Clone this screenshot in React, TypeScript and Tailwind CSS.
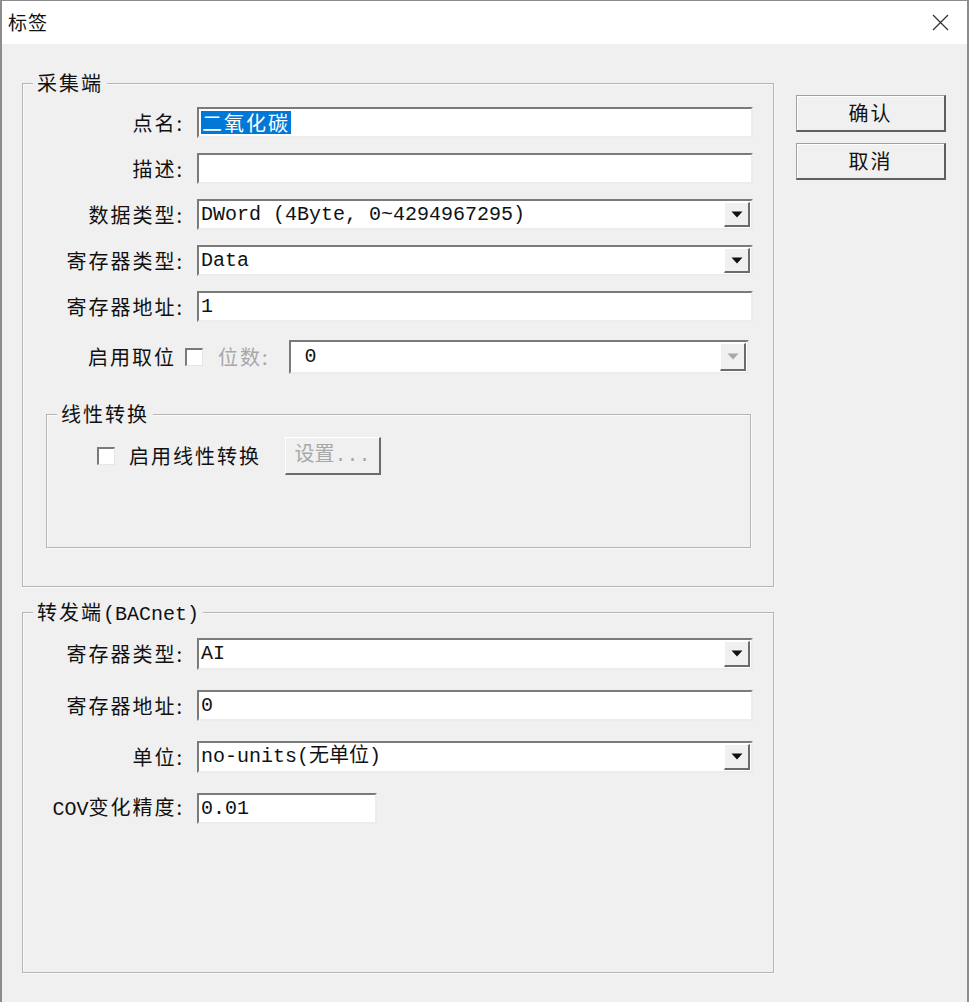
import React from 'react';

const cjk = { fontFamily: '"Noto Sans CJK SC", "Noto Sans", sans-serif' };
const mono = { fontFamily: '"Liberation Mono", "Noto Sans CJK SC", monospace' };

// Classic Win32 sunken edit box border
const sunken =
  'border-t-2 border-l-2 border-b-2 border-r-2 border-t-[#7a7a7a] border-l-[#7a7a7a] border-b-[#ececec] border-r-[#ececec] bg-white';

function DropArrow({ disabled }: { disabled?: boolean }) {
  return (
    <div className="w-[26px] h-full flex items-center justify-center bg-[#f0f0f0] border-t border-l border-b-2 border-r-2 border-t-white border-l-white border-b-[#6b6b6b] border-r-[#6b6b6b]">
      <svg width="12" height="7" viewBox="0 0 12 7">
        <path d="M0.5 0.5 H11.5 L6 6.5 Z" fill={disabled ? '#a8a8a8' : '#111'} />
      </svg>
    </div>
  );
}

function Edit({ value, selected, className = '' }: { value?: string; selected?: boolean; className?: string }) {
  return (
    <div className={`h-[31px] flex items-center pl-[2px] text-[20px] text-[#111] ${sunken} ${className}`} style={mono}>
      {selected ? (
        <span className="bg-[#0078d7] text-white leading-[23px] pl-[1px] pr-[1px] tracking-[2px]" style={cjk}>
          {value}
        </span>
      ) : (
        <span className="leading-none">{value}</span>
      )}
    </div>
  );
}

function Combo({ value, disabled, className = '' }: { value: string; disabled?: boolean; className?: string }) {
  return (
    <div className={`flex items-stretch text-[20px] text-[#111] ${sunken} ${className}`} style={mono}>
      <div className="flex-1 flex items-center pl-[2px] leading-none whitespace-pre">{value}</div>
      <div className="py-[1px] pr-[1px]">
        <DropArrow disabled={disabled} />
      </div>
    </div>
  );
}

function Label({ text, latin }: { text: string; latin?: string }) {
  return (
    <div className="w-[161px] text-right text-[20px] tracking-[2px] text-[#111] leading-none whitespace-nowrap" style={cjk}>
      {latin && (
        <span className="tracking-normal" style={mono}>
          {latin}
        </span>
      )}
      {text}
    </div>
  );
}

function CheckBox() {
  return (
    <div className="w-[18px] h-[18px] bg-white border-t-2 border-l-2 border-t-[#7a7a7a] border-l-[#7a7a7a] border-b border-r border-b-[#e6e6e6] border-r-[#e6e6e6]" />
  );
}

function GroupBox({
  title,
  className = '',
  children,
}: {
  title: React.ReactNode;
  className?: string;
  children: React.ReactNode;
}) {
  return (
    <div className={`relative border border-[#b4b4b4] shadow-[inset_1px_1px_0_#fafafa,1px_1px_0_#fafafa] ${className}`}>
      <div
        className="absolute -top-[13px] left-[10px] px-[4px] bg-[#f0f0f0] text-[20px] tracking-[2px] leading-[24px] text-[#111] whitespace-nowrap"
        style={cjk}
      >
        {title}
      </div>
      {children}
    </div>
  );
}

function Button({ label }: { label: string }) {
  return (
    <div
      className="w-[150px] h-[37px] flex items-center justify-center text-[20px] tracking-[2px] text-[#111] bg-[#f0f0f0] border-t border-l border-b-2 border-r-2 border-t-[#a0a0a0] border-l-[#a0a0a0] border-b-[#5f5f5f] border-r-[#5f5f5f] shadow-[inset_1px_1px_0_white]"
      style={cjk}
    >
      {label}
    </div>
  );
}

export default function App() {
  return (
    <div className="w-[969px] h-[1002px] bg-[#f0f0f0] border-l-2 border-t border-r-2 border-[#8c8c8c] flex flex-col overflow-hidden">
      {/* Title bar */}
      <div className="h-[43px] bg-white flex items-center justify-between pl-[6px] pr-[18px] shrink-0">
        <span className="text-[19px] tracking-[1px] text-[#111]" style={cjk}>
          标签
        </span>
        <svg width="17" height="17" viewBox="0 0 17 17">
          <path d="M1 1 L16 16 M16 1 L1 16" stroke="#333" strokeWidth="1.3" />
        </svg>
      </div>

      {/* Body */}
      <div className="flex gap-[22px] pl-[20px] pt-[39px]">
        <div className="w-[752px] flex flex-col">
          <GroupBox title="采集端" className="pt-[23px] pb-[38px]">
            <div className="flex flex-col gap-[15px]">
              <div className="flex items-center gap-[13px] pr-[20px]">
                <Label text="点名:" />
                <Edit value="二氧化碳" selected className="flex-1" />
              </div>
              <div className="flex items-center gap-[13px] pr-[20px]">
                <Label text="描述:" />
                <Edit className="flex-1" />
              </div>
              <div className="flex items-center gap-[13px] pr-[20px]">
                <Label text="数据类型:" />
                <Combo value="DWord (4Byte, 0~4294967295)" className="flex-1 h-[31px]" />
              </div>
              <div className="flex items-center gap-[13px] pr-[20px]">
                <Label text="寄存器类型:" />
                <Combo value="Data" className="flex-1 h-[31px]" />
              </div>
              <div className="flex items-center gap-[13px] pr-[20px]">
                <Label text="寄存器地址:" />
                <Edit value="1" className="flex-1" />
              </div>
              <div className="flex items-center mt-[3px] pr-[24px]">
                <div className="w-[153px] text-right text-[20px] tracking-[2px] text-[#111] leading-none" style={cjk}>
                  启用取位
                </div>
                <div className="ml-[9px]">
                  <CheckBox />
                </div>
                <div className="ml-[15px] text-[20px] tracking-[2px] text-[#a8a8a8] leading-none" style={cjk}>
                  位数:
                </div>
                <Combo value=" 0" disabled className="flex-1 h-[34px] ml-[19px]" />
              </div>
            </div>

            {/* 线性转换 */}
            <GroupBox title="线性转换" className="mt-[40px] ml-[23px] mr-[22px] h-[134px] pt-[22px] pl-[50px]">
              <div className="flex items-center">
                <CheckBox />
                <span className="ml-[14px] text-[20px] tracking-[2px] text-[#111] leading-none" style={cjk}>
                  启用线性转换
                </span>
                <div
                  className="ml-[24px] w-[96px] h-[38px] flex items-center justify-center text-[20px] text-[#a8a8a8] border-t border-l border-b-2 border-r-2 border-t-white border-l-white border-b-[#6b6b6b] border-r-[#6b6b6b]"
                  style={mono}
                >
                  设置...
                </div>
              </div>
            </GroupBox>
          </GroupBox>

          <GroupBox
            title={
              <>
                转发端<span className="tracking-normal" style={mono}>(BACnet)</span>
              </>
            }
            className="mt-[25px] h-[361px] pt-[25px]"
          >
            <div className="flex flex-col gap-[20px]">
              <div className="flex items-center gap-[13px] pr-[20px]">
                <Label text="寄存器类型:" />
                <Combo value="AI" className="flex-1 h-[32px]" />
              </div>
              <div className="flex items-center gap-[13px] pr-[20px]">
                <Label text="寄存器地址:" />
                <Edit value="0" className="flex-1" />
              </div>
              <div className="flex items-center gap-[13px] pr-[20px]">
                <Label text="单位:" />
                <Combo value="no-units(无单位)" className="flex-1 h-[32px]" />
              </div>
              <div className="flex items-center gap-[13px] pr-[20px]">
                <Label latin="COV" text="变化精度:" />
                <Edit value="0.01" className="w-[180px]" />
              </div>
            </div>
          </GroupBox>
        </div>

        {/* Buttons */}
        <div className="flex flex-col gap-[11px] pt-[12px]">
          <Button label="确认" />
          <Button label="取消" />
        </div>
      </div>
    </div>
  );
}
